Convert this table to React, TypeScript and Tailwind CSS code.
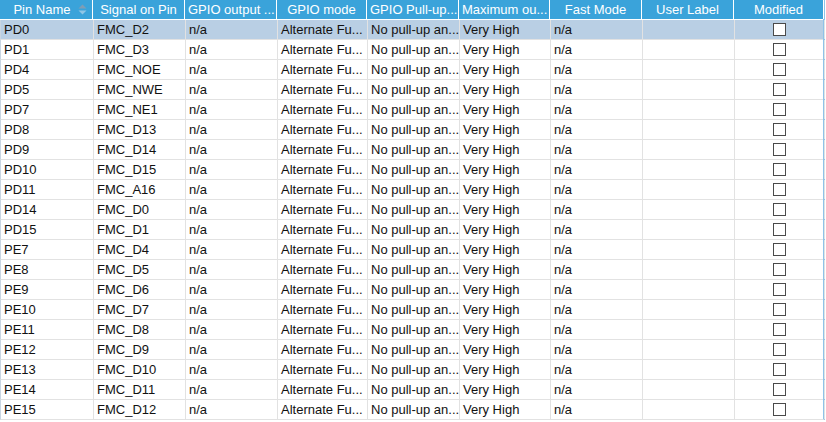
import React from 'react';

const rows: [string, string][] = [
  ['PD0', 'FMC_D2'],
  ['PD1', 'FMC_D3'],
  ['PD4', 'FMC_NOE'],
  ['PD5', 'FMC_NWE'],
  ['PD7', 'FMC_NE1'],
  ['PD8', 'FMC_D13'],
  ['PD9', 'FMC_D14'],
  ['PD10', 'FMC_D15'],
  ['PD11', 'FMC_A16'],
  ['PD14', 'FMC_D0'],
  ['PD15', 'FMC_D1'],
  ['PE7', 'FMC_D4'],
  ['PE8', 'FMC_D5'],
  ['PE9', 'FMC_D6'],
  ['PE10', 'FMC_D7'],
  ['PE11', 'FMC_D8'],
  ['PE12', 'FMC_D9'],
  ['PE13', 'FMC_D10'],
  ['PE14', 'FMC_D11'],
  ['PE15', 'FMC_D12'],
];

const cols = 'grid grid-cols-[93px_92px_92px_90px_92px_91px_92px_92px_90px]';

const SortIcon = () => (
  <svg width="9" height="11" viewBox="0 0 9 11" className="shrink-0">
    <path d="M0.5 4.5 L4.5 0.5 L8.5 4.5 Z" fill="#7f9db5" />
    <path d="M0.5 6.5 L4.5 10.5 L8.5 6.5 Z" fill="#8fc6e6" />
  </svg>
);

const Head = ({ children, left }: { children: React.ReactNode; left?: boolean }) => (
  <div
    className={`h-[19px] flex items-center border-r border-white overflow-hidden whitespace-nowrap ${
      left ? 'pl-[3px]' : 'justify-center'
    }`}
  >
    {children}
  </div>
);

const Cell = ({ children }: { children?: React.ReactNode }) => (
  <div className="h-[19px] flex items-center pl-[3px] border-r border-[#e2e2e2] overflow-hidden whitespace-nowrap">
    {children}
  </div>
);

export default function App() {
  return (
    <div
      className="w-[826px] h-[422px] bg-white overflow-hidden text-[13px] leading-none"
      style={{ fontFamily: '"Liberation Sans", Arial, sans-serif' }}
    >
      <div className="w-[825px] border-r-2 border-[#8ec3e8] h-[420px] border-b border-b-[#e2e2e2]">
        <div className={`${cols} bg-[#3aa3da] text-white border-b border-white`}>
          <div className="h-[19px] flex items-center justify-center gap-[7px] border-r border-white pl-2">
            <span>Pin Name</span>
            <SortIcon />
          </div>
          <Head>Signal on Pin</Head>
          <Head left>GPIO output ...</Head>
          <Head>GPIO mode</Head>
          <Head left>GPIO Pull-up...</Head>
          <Head left>Maximum ou...</Head>
          <Head>Fast Mode</Head>
          <Head>User Label</Head>
          <Head>Modified</Head>
        </div>
        {rows.map(([pin, sig], i) => (
          <div
            key={pin}
            className={`${cols} border-b border-[#e2e2e2] text-[#111] ${
              i === 0 ? 'bg-[#b9cfe4]' : 'bg-white'
            } border-l border-l-[#c9d6e2]`}
          >
            <Cell>{pin}</Cell>
            <Cell>{sig}</Cell>
            <Cell>n/a</Cell>
            <Cell>Alternate Fu...</Cell>
            <Cell>No pull-up an...</Cell>
            <Cell>Very High</Cell>
            <Cell>n/a</Cell>
            <Cell />
            <div className="h-[19px] flex items-center justify-center border-r border-[#e2e2e2]">
              <span className="block w-[13px] h-[13px] border border-[#4a4a4a] bg-white" />
            </div>
          </div>
        ))}
      </div>
    </div>
  );
}
